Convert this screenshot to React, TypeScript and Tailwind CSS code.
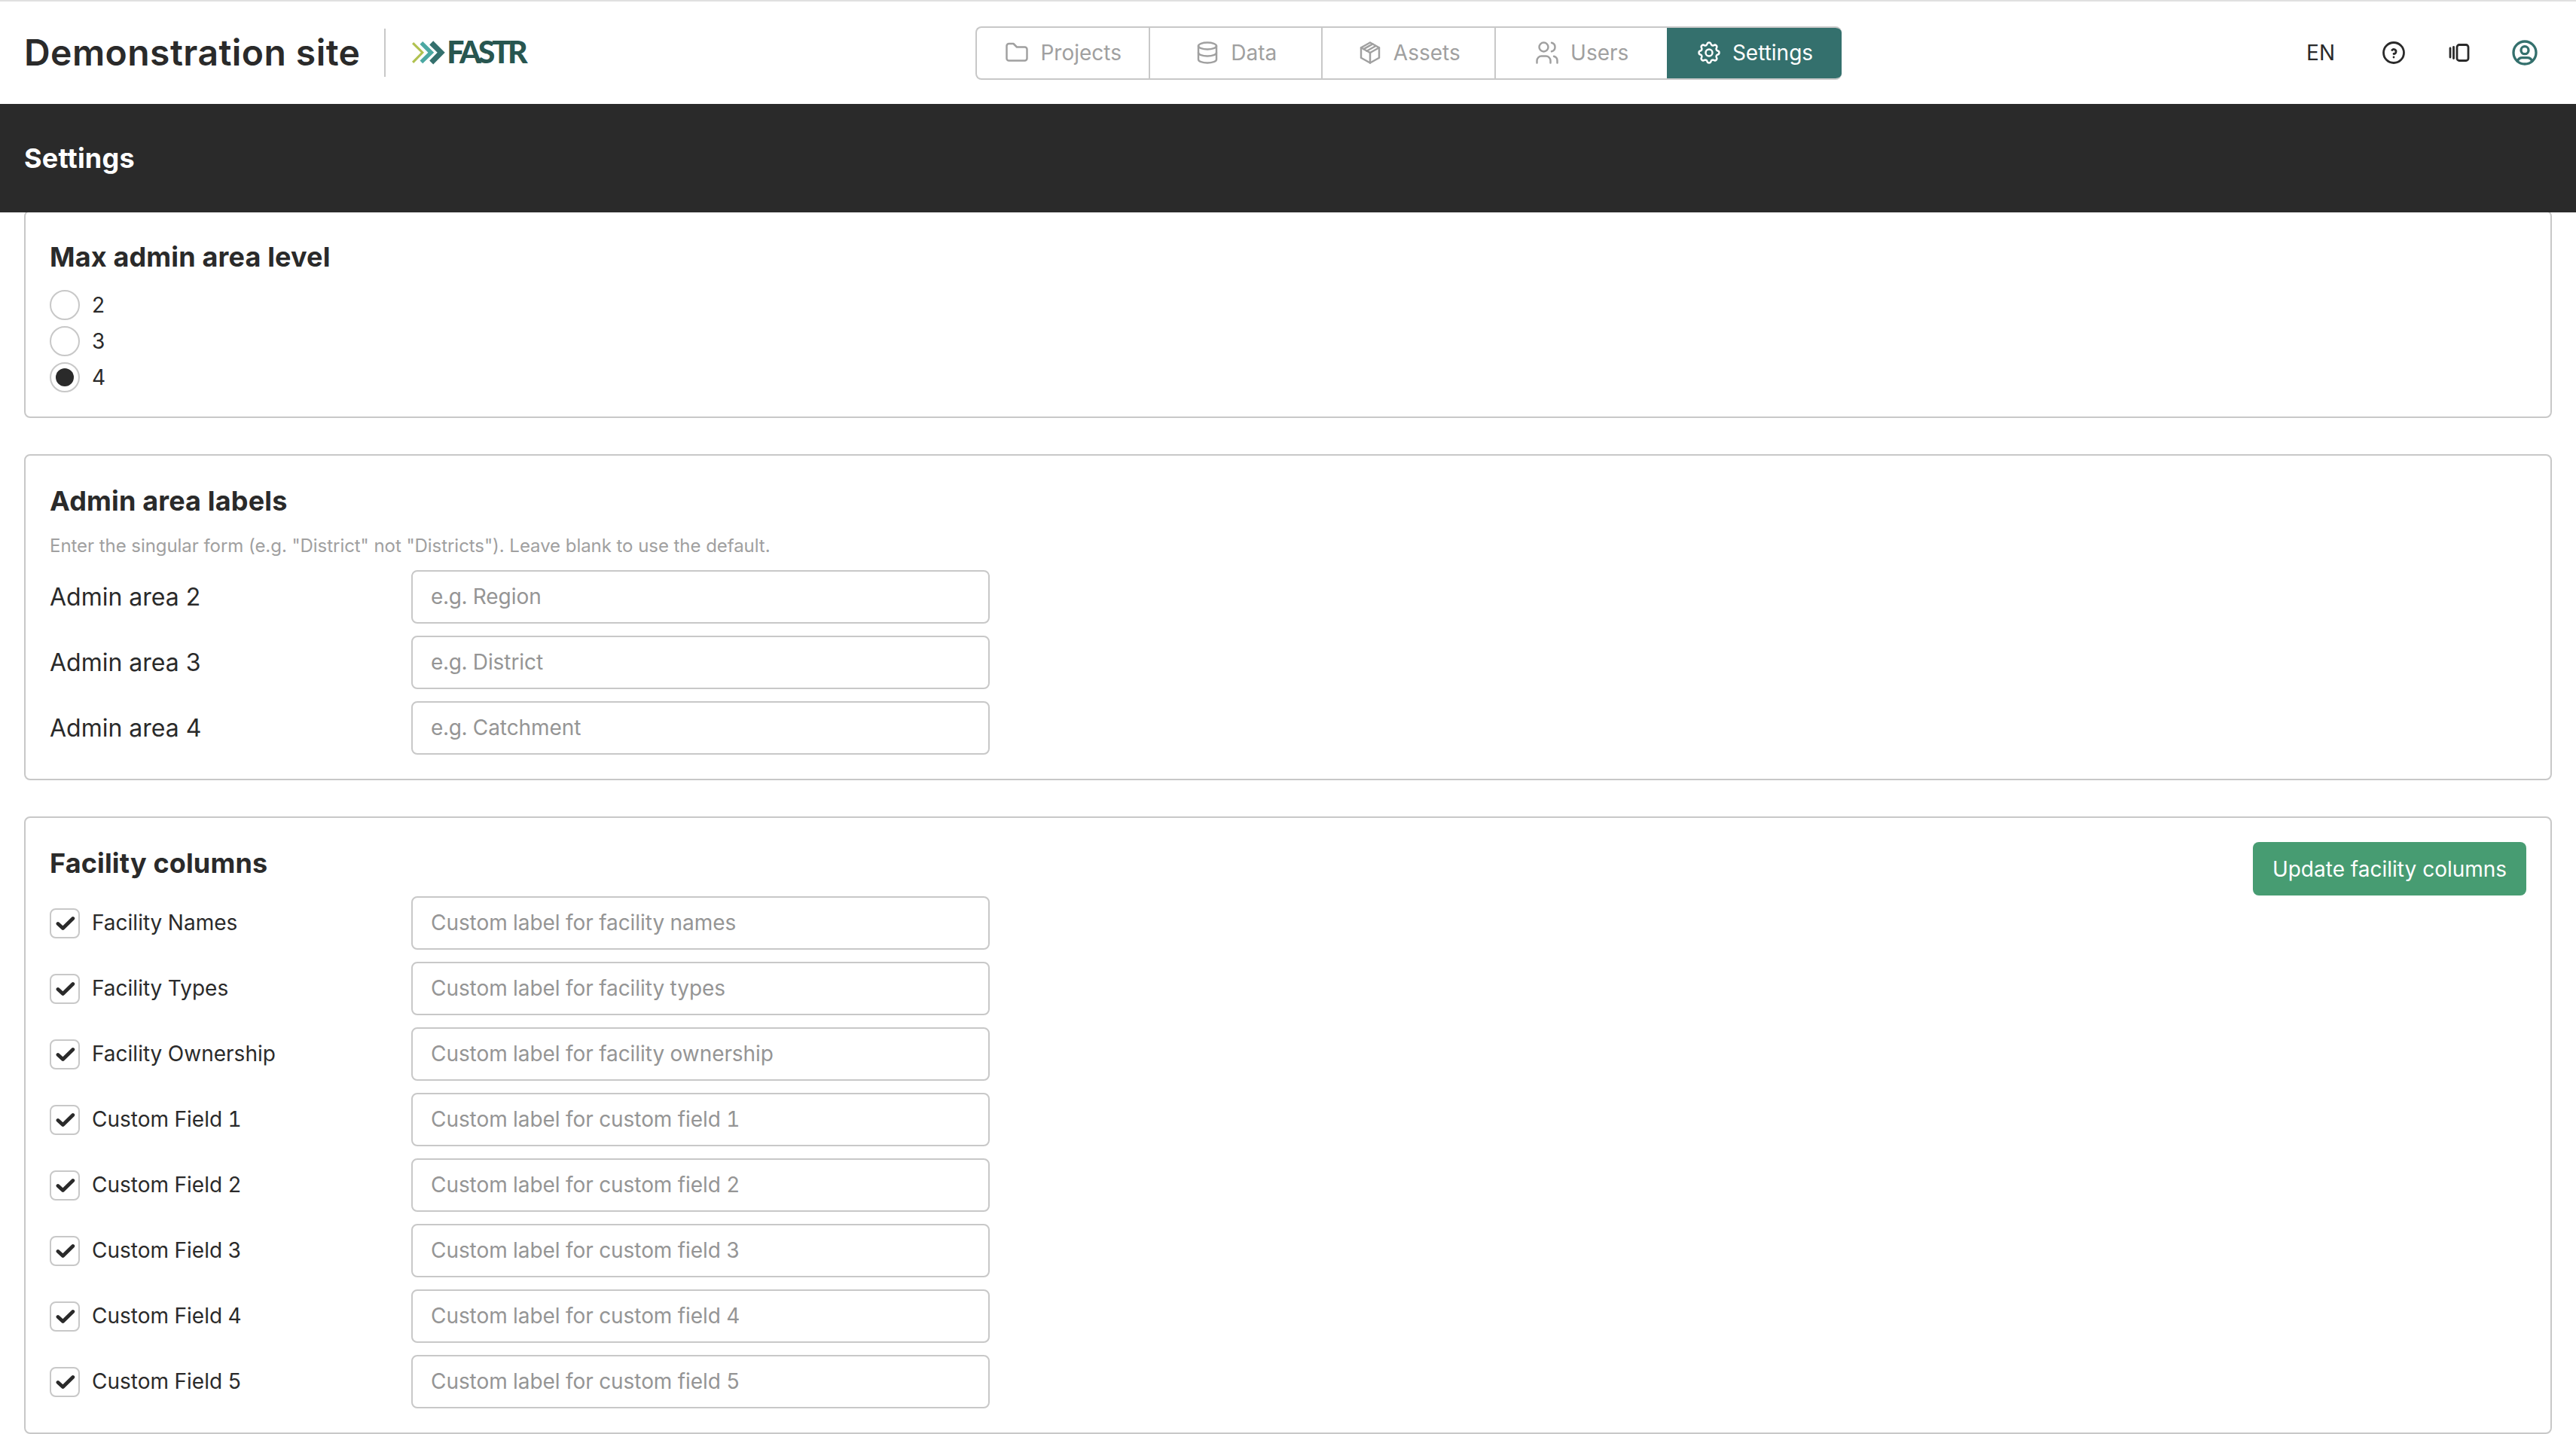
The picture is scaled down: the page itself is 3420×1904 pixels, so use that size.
import React from "react";

type IconProps = { paths: string[]; className?: string; stroke?: number };

function Icon({ paths, className = "size-9", stroke = 1.65 }: IconProps) {
  return (
    <svg
      viewBox="0 0 24 24"
      className={`${className} shrink-0`}
      fill="none"
      stroke="currentColor"
      strokeWidth={stroke}
      strokeLinecap="round"
      strokeLinejoin="round"
    >
      {paths.map((d) => (
        <path key={d} d={d} />
      ))}
    </svg>
  );
}

const ICONS = {
  folder: ["M5 4h4l3 3h7a2 2 0 0 1 2 2v8a2 2 0 0 1 -2 2h-14a2 2 0 0 1 -2 -2v-11a2 2 0 0 1 2 -2"],
  database: [
    "M4 6a8 3 0 1 0 16 0a8 3 0 1 0 -16 0",
    "M4 6v6a8 3 0 0 0 16 0v-6",
    "M4 12v6a8 3 0 0 0 16 0v-6",
  ],
  box: [
    "M12 3l8 4.5l0 9l-8 4.5l-8 -4.5l0 -9l8 -4.5",
    "M12 12l8 -4.5",
    "M12 12l0 9",
    "M12 12l-8 -4.5",
    "M14.33 4.3l-8 4.5",
    "M17 6l-8 4.5",
  ],
  users: [
    "M5 7a4 4 0 1 0 8 0a4 4 0 1 0 -8 0",
    "M3 21v-2a4 4 0 0 1 4 -4h4a4 4 0 0 1 4 4v2",
    "M16 3.13a4 4 0 0 1 0 7.75",
    "M21 21v-2a4 4 0 0 0 -3 -3.85",
  ],
  settings: [
    "M10.325 4.317c.426 -1.756 2.924 -1.756 3.35 0a1.724 1.724 0 0 0 2.573 1.066c1.543 -.94 3.31 .826 2.37 2.37a1.724 1.724 0 0 0 1.065 2.572c1.756 .426 1.756 2.924 0 3.35a1.724 1.724 0 0 0 -1.066 2.573c.94 1.543 -.826 3.31 -2.37 2.37a1.724 1.724 0 0 0 -2.572 1.065c-.426 1.756 -2.924 1.756 -3.35 0a1.724 1.724 0 0 0 -2.573 -1.066c-1.543 .94 -3.31 -.826 -2.37 -2.37a1.724 1.724 0 0 0 -1.065 -2.572c-1.756 -.426 -1.756 -2.924 0 -3.35a1.724 1.724 0 0 0 1.066 -2.573c-.94 -1.543 .826 -3.31 2.37 -2.37c1 .608 2.296 .07 2.572 -1.065",
    "M9 12a3 3 0 1 0 6 0a3 3 0 0 0 -6 0",
  ],
  help: [
    "M3 12a9 9 0 1 0 18 0a9 9 0 1 0 -18 0",
    "M12 16v.01",
    "M12 13a2 2 0 0 0 .914 -3.782a1.98 1.98 0 0 0 -2.414 .483",
  ],
  versions: [
    "M10 7a2 2 0 0 1 2 -2h6a2 2 0 0 1 2 2v10a2 2 0 0 1 -2 2h-6a2 2 0 0 1 -2 -2z",
    "M7 7l0 10",
    "M4 8l0 8",
  ],
  profile: [
    "M3 12a9 9 0 1 0 18 0a9 9 0 1 0 -18 0",
    "M9 10a3 3 0 1 0 6 0a3 3 0 1 0 -6 0",
    "M6.168 18.849a4 4 0 0 1 3.832 -2.849h4a4 4 0 0 1 3.834 2.855",
  ],
};

const TABS = [
  { label: "Projects", icon: ICONS.folder },
  { label: "Data", icon: ICONS.database },
  { label: "Assets", icon: ICONS.box },
  { label: "Users", icon: ICONS.users },
  { label: "Settings", icon: ICONS.settings, active: true },
];

function Logo() {
  return (
    <svg viewBox="0 0 156 34" className="h-[34px] w-[156px] shrink-0 overflow-visible">
      <path fill="#b0c14f" d="M1 5.2l2.2-2.2L17 16.8 3.2 31 1 28.8 12.8 16.8z" />
      <path fill="#4ba8a2" d="M11.5 5.8L15.2 2 30.2 16.8 15.2 31.3 11.5 27.6 22.4 16.8z" />
      <path fill="#34706d" d="M24.2 6.4L29.2 1.2 44.7 16.8 29.2 32.5 24.2 27.4 34.7 16.8z" />
      <text
        x="47.2"
        y="31"
        fontFamily="Lato, sans-serif"
        fontWeight="900"
        fontSize="41"
        textLength="107.5"
        lengthAdjust="spacing"
        fill="#285650"
      >
        FASTR
      </text>
    </svg>
  );
}

function Header() {
  return (
    <header className="flex h-[138px] items-center border-t-2 border-[#e0e0e0] bg-white">
      <div className="flex w-[1295px] shrink-0 items-center pl-8">
        <h1 className="w-[446px] text-[48px] leading-[64px] font-semibold tracking-[0.45px] whitespace-nowrap">
          Demonstration site
        </h1>
        <div className="ml-8 h-16 w-0.5 bg-[#c8c8c8]" />
        <div className="ml-[34px]">
          <Logo />
        </div>
      </div>
      <nav className="flex h-[71px] w-[1150px] shrink-0 overflow-hidden rounded-lg border-2 border-r-0 border-[#c8c8c8]">
        {TABS.map((t) => (
          <button
            key={t.label}
            className={
              t.active
                ? "-my-0.5 -ml-0.5 flex flex-1 items-center justify-center gap-[13px] bg-[#34706d] text-[28px] text-white"
                : "flex w-[229.5px] items-center justify-center gap-[13px] border-r-2 border-[#c8c8c8] text-[28px] text-[#a0a0a0]"
            }
          >
            <Icon paths={t.icon} />
            {t.label}
          </button>
        ))}
      </nav>
      <div className="flex flex-1 items-center justify-end pr-12">
        <span className="text-[28px]">EN</span>
        <Icon paths={ICONS.help} className="ml-[60px] size-9" stroke={1.85} />
        <Icon paths={ICONS.versions} className="ml-[51px] size-9" stroke={1.85} />
        <Icon paths={ICONS.profile} className="ml-[49px] size-10 text-[#34706d]" stroke={2} />
      </div>
    </header>
  );
}

function Card({ title, action, children }: {
  title: string;
  action?: React.ReactNode;
  children: React.ReactNode;
}) {
  return (
    <section className="flex items-start justify-between rounded-lg border-2 border-[#c8c8c8] p-8">
      <div>
        <h2 className="mb-4 text-[36px] leading-[56px] font-bold tracking-[0.15px]">{title}</h2>
        {children}
      </div>
      {action}
    </section>
  );
}

function TextField({ placeholder }: { placeholder: string }) {
  return (
    <input
      className="h-[71px] w-[768px] rounded-lg border-2 border-[#c8c8c8] bg-white px-6 pb-px text-[28px] tracking-[-0.06px] tabular-nums placeholder:text-[#959595]"
      placeholder={placeholder}
    />
  );
}

const LEVELS = ["2", "3", "4"];

const AREA_LABELS = [
  { label: "Admin area 2", placeholder: "e.g. Region" },
  { label: "Admin area 3", placeholder: "e.g. District" },
  { label: "Admin area 4", placeholder: "e.g. Catchment" },
];

const FACILITY_COLUMNS = [
  "Facility Names",
  "Facility Types",
  "Facility Ownership",
  "Custom Field 1",
  "Custom Field 2",
  "Custom Field 3",
  "Custom Field 4",
  "Custom Field 5",
];

export default function App() {
  return (
    <div className="flex h-[1904px] w-[3420px] flex-col overflow-hidden bg-white font-['Inter',sans-serif] text-[#2a2a2a]">
      <Header />
      <div className="z-10 flex h-36 shrink-0 items-center bg-[#2a2a2a] px-8">
        <h2 className="text-[36px] leading-[54px] font-bold tracking-[0.2px] text-white">Settings</h2>
      </div>
      <main className="-mt-[3px] flex flex-col gap-12 px-8">
        <Card title="Max admin area level">
          <div className="flex flex-col gap-2">
            {LEVELS.map((level) => (
              <label key={level} className="flex h-10 items-center gap-4 text-[28px]">
                <span className="flex size-10 items-center justify-center rounded-full border-2 border-[#c8c8c8]">
                  {level === "4" && <span className="size-6 rounded-full bg-[#2a2a2a]" />}
                </span>
                {level}
              </label>
            ))}
          </div>
        </Card>

        <Card title="Admin area labels">
          <p className="-mt-px mb-[15px] text-[24px] leading-[34px] tracking-[-0.05px] text-[#a0a0a0]">
            Enter the singular form (e.g. "District" not "Districts"). Leave blank to use the default.
          </p>
          <div className="flex flex-col gap-4">
            {AREA_LABELS.map((row) => (
              <div key={row.label} className="flex items-center">
                <span className="w-[480px] text-[32px] leading-[48px]">{row.label}</span>
                <TextField placeholder={row.placeholder} />
              </div>
            ))}
          </div>
        </Card>

        <Card
          title="Facility columns"
          action={
            <button className="h-[71px] w-[363px] rounded-lg bg-[#479c72] text-[28px] text-white">
              Update facility columns
            </button>
          }
        >
          <div className="flex flex-col gap-4">
            {FACILITY_COLUMNS.map((name) => (
              <div key={name} className="flex items-center">
                <label className="flex w-[480px] items-center gap-4 text-[28px] tabular-nums">
                  <span className="flex size-10 items-center justify-center rounded-lg border-2 border-[#c8c8c8]">
                    <svg
                      viewBox="0 0 26 20"
                      className="ml-px h-5 w-[26px]"
                      fill="none"
                      stroke="currentColor"
                      strokeWidth="4.8"
                      strokeLinecap="round"
                      strokeLinejoin="round"
                    >
                      <path d="M3 10.5L9.5 16.5 22.8 3.5" />
                    </svg>
                  </span>
                  <span className="-mt-px">{name}</span>
                </label>
                <TextField placeholder={`Custom label for ${name.toLowerCase()}`} />
              </div>
            ))}
          </div>
        </Card>
      </main>
    </div>
  );
}
